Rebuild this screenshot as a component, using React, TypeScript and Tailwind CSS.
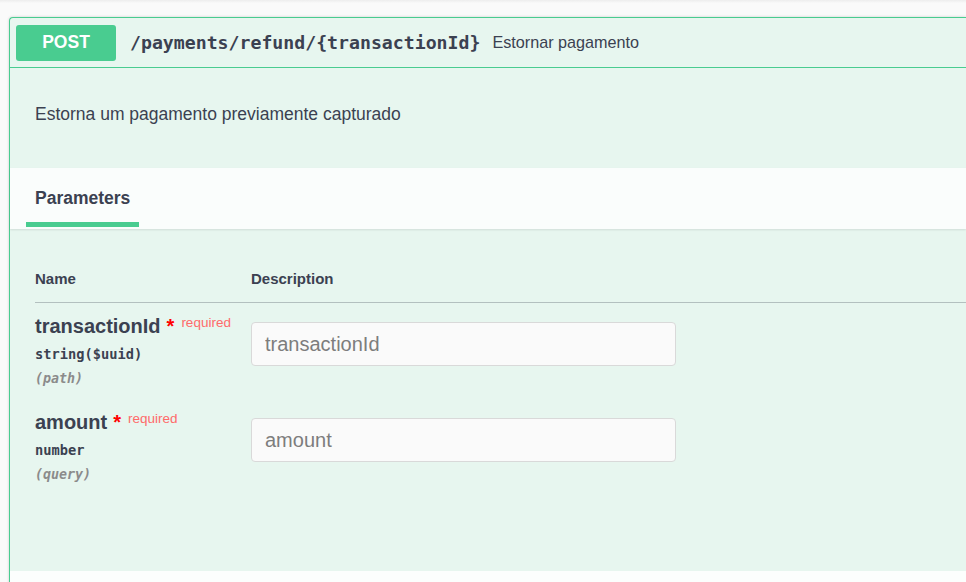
import React from 'react'

interface Param {
  name: string
  type: string
  location: string
}

const params: Param[] = [
  { name: 'transactionId', type: 'string($uuid)', location: '(path)' },
  { name: 'amount', type: 'number', location: '(query)' },
]

const sans = { fontFamily: '"Liberation Sans", Arial, sans-serif' }
const mono = { fontFamily: '"DejaVu Sans Mono", "Liberation Mono", monospace' }

function ParamRow({ param }: { param: Param }) {
  return (
    <div className="flex pt-[11px] pb-[10px]">
      <div className="w-[216px] shrink-0">
        <div className="flex items-start leading-[24px] text-[20px] font-bold text-[#3b4151]">
          <span>{param.name}</span>
          <span className="ml-[6px] text-[red]">*</span>
          <span className="ml-[7px] -mt-[1px] text-[13.5px] font-normal text-[#ff6a6a] leading-[20px]">required</span>
        </div>
        <div style={mono} className="mt-[6px] text-[13.7px] font-bold leading-[20px] text-[#3b4151]">
          {param.type}
        </div>
        <div style={mono} className="mt-[5px] text-[13.3px] font-bold italic leading-[20px] text-[#8b8b8b]">
          {param.location}
        </div>
      </div>
      <div className="pt-[8px]">
        <input
          placeholder={param.name}
          style={sans}
          className="w-[425px] h-[44px] rounded-[4px] border border-[#d9d9d9] bg-[#fafafa] px-[13px] text-[20px] text-[#3b4151] placeholder:text-[#7d7d7d] outline-none"
        />
      </div>
    </div>
  )
}

export default function App() {
  return (
    <div style={sans} className="w-full h-[582px] overflow-hidden bg-[#fafafa]">
      <div className="h-[3px] bg-gradient-to-b from-[#ededed] to-[#fafafa]" />
      <div className="pt-[14px] pl-[9px]">
        <div className="h-[600px] rounded-tl-[4px] border-l border-t border-[#49cc90] bg-[#e7f6ef] shadow-[0_0_3px_rgba(0,0,0,0.19)] flex flex-col">
          {/* summary */}
          <div className="h-[50px] shrink-0 flex items-center border-b border-[#49cc90] px-[6px]">
            <div className="w-[100px] h-[36px] rounded-[3px] bg-[#49cc90] flex items-center justify-center text-white text-[17.5px] font-bold">
              POST
            </div>
            <span style={mono} className="ml-[14px] text-[18.2px] font-bold text-[#3b4151]">
              /payments/refund/{'{transactionId}'}
            </span>
            <span className="ml-[12px] text-[16.2px] text-[#3b4151]">Estornar pagamento</span>
          </div>

          {/* body */}
          <div className="h-[503px] shrink-0">
            <div className="h-[100px] pt-[35px] px-[25px]">
              <p className="text-[17.5px] leading-[22px] text-[#3b4151]">
                Estorna um pagamento previamente capturado
              </p>
            </div>

            <div className="h-[61px] bg-[rgba(255,255,255,0.8)] shadow-[0_1px_2px_rgba(0,0,0,0.1)] pl-[16px]">
              <div className="inline-flex h-[59px] items-center pt-[6px] px-[9px] border-b-[5px] border-[#49cc90] text-[17.5px] font-bold text-[#3b4151]">
                Parameters
              </div>
            </div>

            <div className="pl-[25px]">
              <div className="flex pt-[40px] pb-[13px] border-b border-[rgba(59,65,81,0.3)] text-[15px] font-bold leading-[20px] text-[#3b4151]">
                <div className="w-[216px]">Name</div>
                <div>Description</div>
              </div>
              {params.map((p) => (
                <ParamRow key={p.name} param={p} />
              ))}
            </div>
          </div>

          <div className="flex-1 bg-[#fcfefd]" />
        </div>
      </div>
    </div>
  )
}
